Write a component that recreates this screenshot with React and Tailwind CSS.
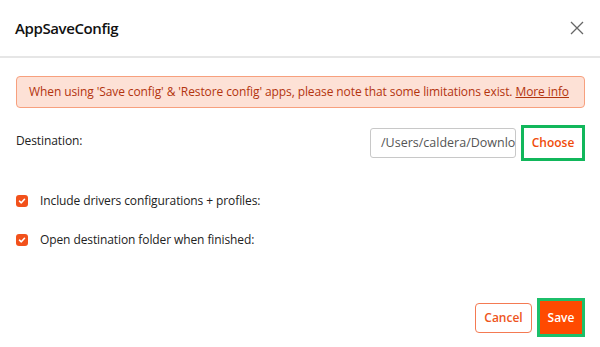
import React from "react";

function Check() {
  return (
    <span className="flex h-[12px] w-[12px] items-center justify-center rounded-[3px] bg-[#f2511b]">
      <svg width="8" height="8" viewBox="0 0 8 8" fill="none">
        <path d="M1.5 4.2 L3.3 5.8 L6.5 2.3" stroke="white" strokeWidth="1.6" strokeLinecap="round" strokeLinejoin="round" />
      </svg>
    </span>
  );
}

export default function App() {
  return (
    <div className="h-[347px] w-[600px] bg-white text-[#222]" style={{ fontFamily: '"Open Sans", "Noto Sans", sans-serif' }}>
      <div className="flex h-[58px] items-center justify-between border-b-2 border-[#e6e6e6] pl-[15px] pr-[16px]">
        <div className="text-[15px] font-semibold text-[#111] tracking-[-0.4px]">AppSaveConfig</div>
        <svg width="14" height="14" viewBox="0 0 14 14" className="text-[#666]">
          <path d="M1 1 L13 13 M13 1 L1 13" stroke="currentColor" strokeWidth="1.3" />
        </svg>
      </div>
      <div className="pl-[16px] pr-[15px] pt-[18px]">
        <div className="flex h-[32px] items-center whitespace-nowrap rounded-[4px] border border-[#f7a07e] bg-[#fde1d6] pl-[12px] text-[12px] text-[#b3340e] tracking-[-0.1px]">
          <span>When using 'Save config' &amp; 'Restore config' apps, please note that some limitations exist. <span className="underline">More info</span></span>
        </div>
        <div className="mt-[17px] flex items-start justify-between">
          <div className="mt-[7px] text-[12px] leading-[18px] tracking-[-0.1px]">Destination:</div>
          <div className="flex items-center gap-[5px]">
            <div className="flex h-[30px] w-[146px] items-center overflow-hidden whitespace-nowrap rounded-[3px] border border-[#c8c8c8] pl-[10px] text-[12.5px] tracking-[0px] text-[#555]">/Users/caldera/Downloads</div>
            <div className="flex h-[36px] w-[64px] items-center justify-center border-[3px] border-[#11b75b] text-[12px] font-semibold text-[#f04b0a]">Choose</div>
          </div>
        </div>
        <div className="mt-[31px] flex h-[18px] items-center gap-[12px] text-[12px] tracking-[-0.1px]">
          <Check />
          <span>Include drivers configurations + profiles:</span>
        </div>
        <div className="mt-[21px] flex h-[18px] items-center gap-[12px] text-[12px] tracking-[-0.1px]">
          <Check />
          <span>Open destination folder when finished:</span>
        </div>
        <div className="mt-[49px] flex items-center justify-end gap-[5px]">
          <div className="flex h-[30px] w-[57px] items-center justify-center rounded-[4px] border border-[#f47a52] text-[12px] font-semibold text-[#ee5420]">Cancel</div>
          <div className="flex h-[39px] w-[48px] items-center justify-center border-[3px] border-[#1cbf6a] bg-[#ff4a00] text-[12px] font-semibold text-white">Save</div>
        </div>
      </div>
    </div>
  );
}
